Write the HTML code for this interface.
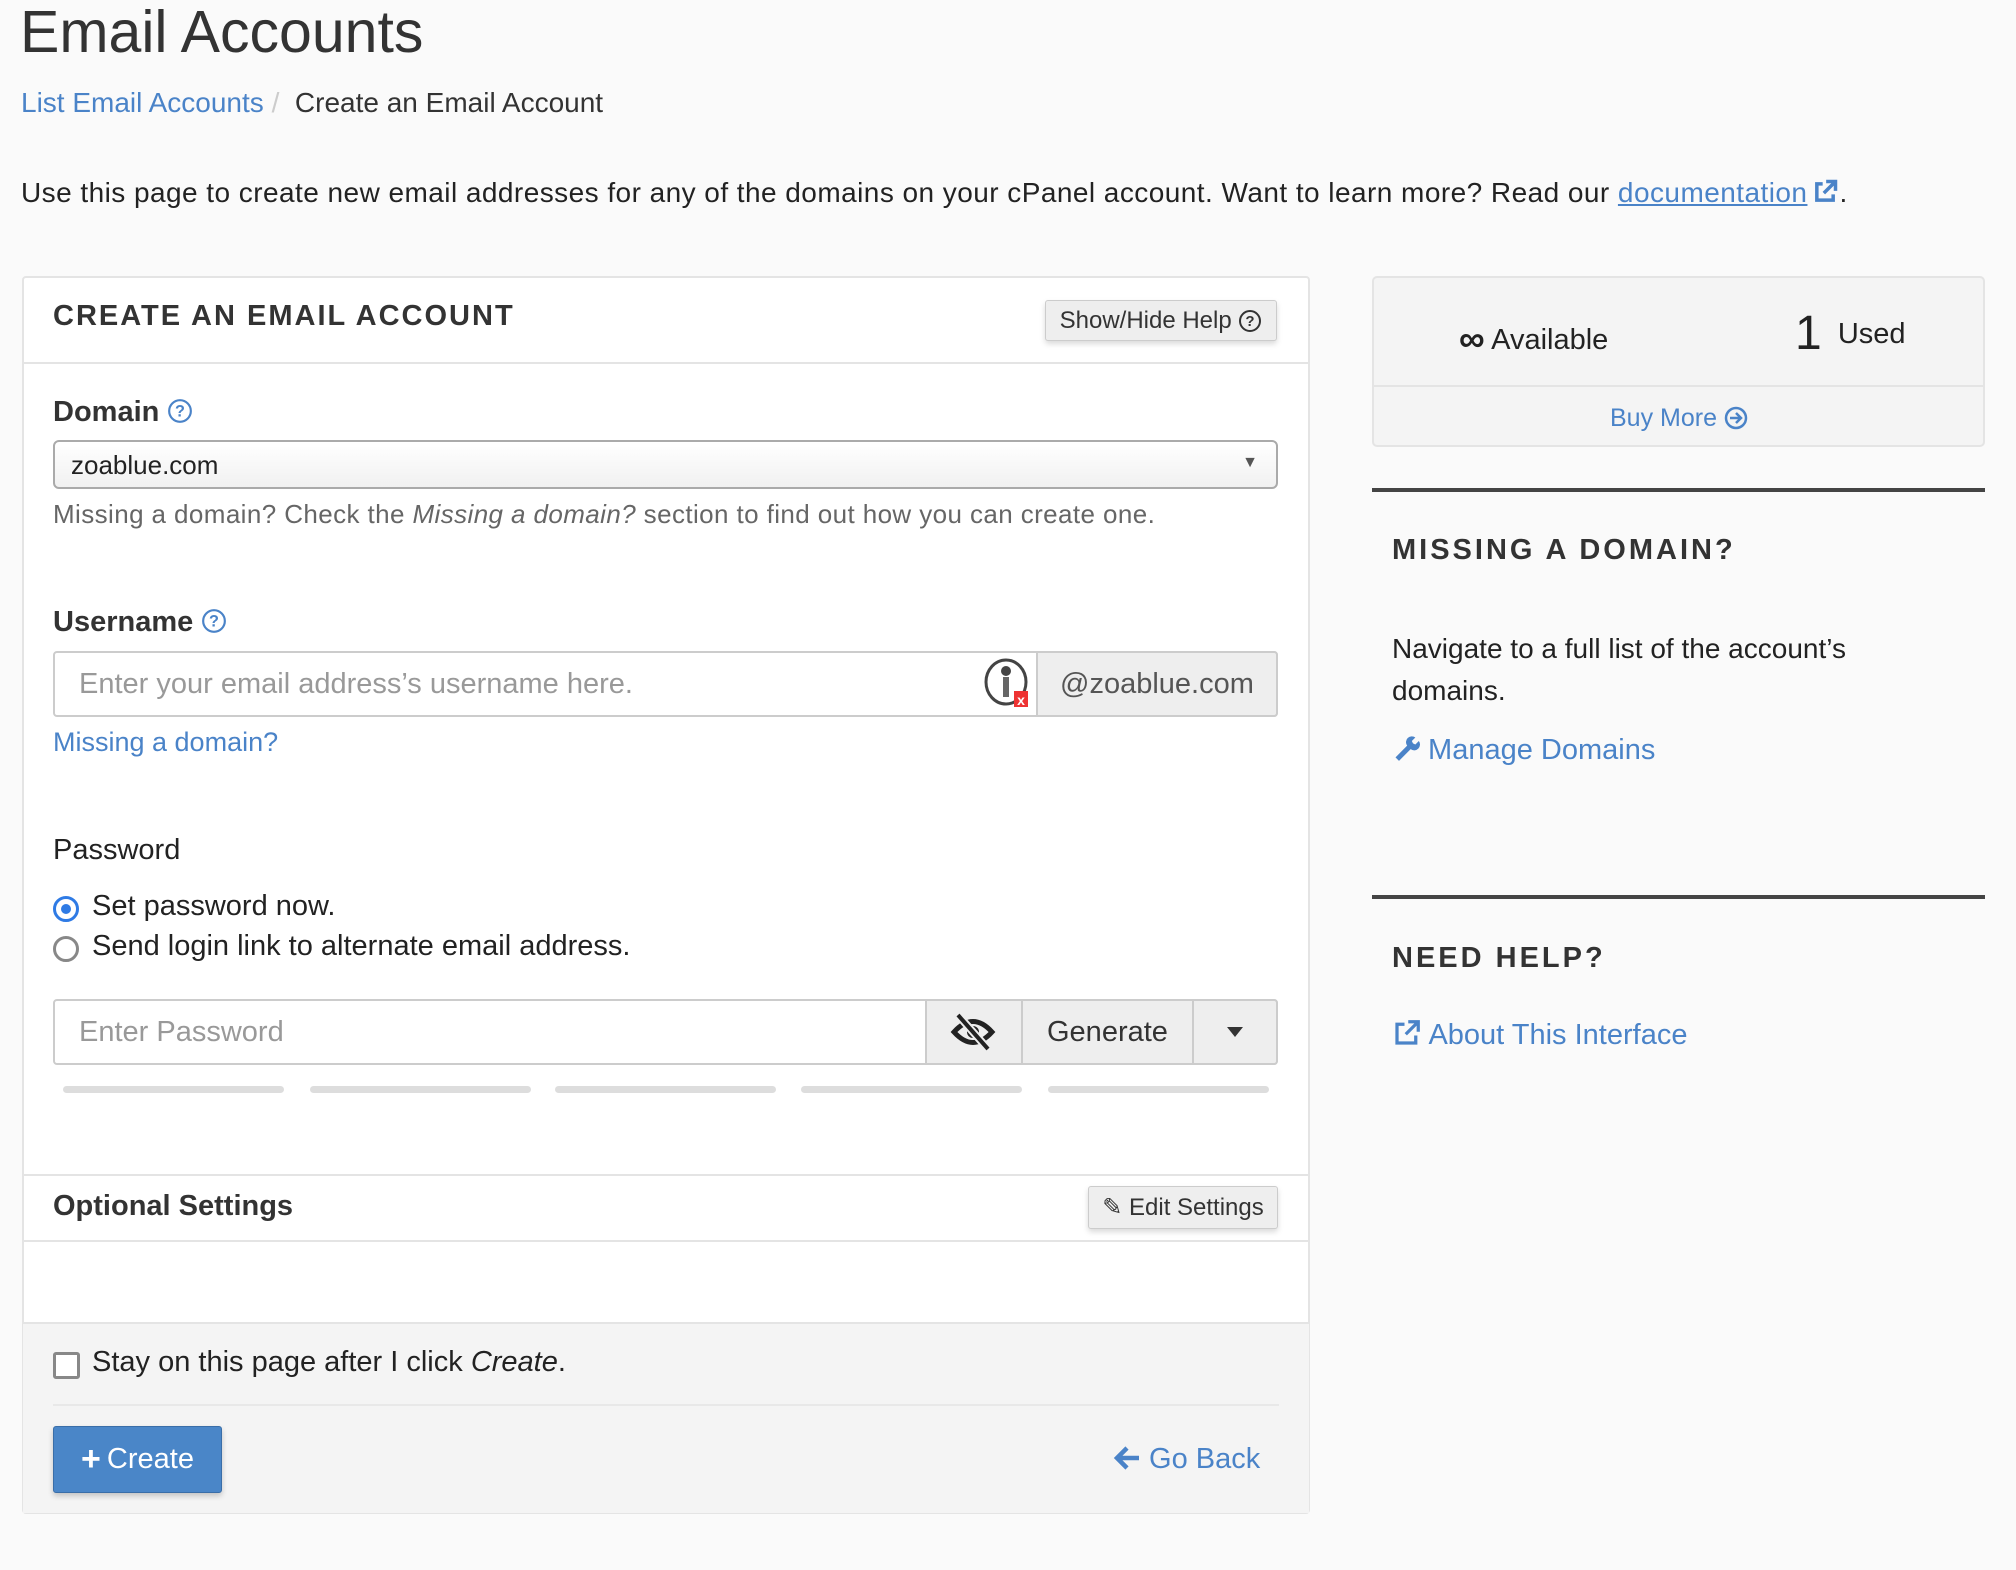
<!DOCTYPE html>
<html><head><meta charset="utf-8"><style>
*{box-sizing:border-box;margin:0;padding:0}
body{width:2016px;height:1570px;background:#fafafa;font-family:"Liberation Sans",sans-serif;color:#333;position:relative;overflow:hidden}
.a{position:absolute;white-space:nowrap}
.blue{color:#4a83c8}
.btn{position:absolute;background:#eee;border:1px solid #ccc;border-radius:3px;box-shadow:0 3px 6px rgba(0,0,0,.15);font-size:24px;color:#333;display:flex;align-items:center;justify-content:center}
.bar{position:absolute;top:1086px;height:7px;width:221px;background:#ddd;border-radius:4px}
</style></head><body>
<div class="a" style="left:20px;top:-2px;font-size:59px;color:#333">Email Accounts</div>
<div class="a" style="left:21px;top:87px;font-size:28px"><span class="blue">List Email Accounts</span> <span style="color:#ccc">/</span> &nbsp;Create an Email Account</div>
<div class="a" style="left:21px;top:177px;font-size:28px;color:#222;letter-spacing:0.45px">Use this page to create new email addresses for any of the domains on your cPanel account. Want to learn more? Read our <span class="blue" style="text-decoration:underline">documentation</span><svg width="28" height="28" viewBox="0 0 24 24" style="vertical-align:-4px;margin-left:4px"><path d="M10 5H5v14h14v-5M13 3h8v8M21 3 11 13" fill="none" stroke="#4a83c8" stroke-width="3"/></svg>.</div>

<!-- main panel -->
<div class="a" style="left:22px;top:276px;width:1288px;height:1238px;background:#fff;border:2px solid #e4e4e4;border-radius:4px"></div>
<div class="a" style="left:23px;top:362px;width:1286px;height:2px;background:#e4e4e4"></div>
<div class="a" style="left:53px;top:300px;font-size:29px;font-weight:bold;letter-spacing:2px;color:#333">CREATE AN EMAIL ACCOUNT</div>
<div class="btn" style="left:1045px;top:300px;width:232px;height:41px">Show/Hide Help&nbsp;<svg width="24" height="24" viewBox="0 0 24 24"><circle cx="12" cy="12" r="10" fill="none" stroke="#333" stroke-width="2"/><text x="12" y="17" font-size="15" text-anchor="middle" font-family="Liberation Sans" font-weight="bold" fill="#333">?</text></svg></div>

<div class="a" style="left:53px;top:396px;font-size:29px;font-weight:bold">Domain <svg width="26" height="26" viewBox="0 0 24 24" style="vertical-align:-3px"><circle cx="12" cy="12" r="10" fill="none" stroke="#4a83c8" stroke-width="2"/><text x="12" y="17" font-size="15" text-anchor="middle" font-family="Liberation Sans" fill="#4a83c8">?</text></svg></div>
<div class="a" style="left:53px;top:440px;width:1225px;height:49px;border:2px solid #aaa;border-radius:6px;background:linear-gradient(#fff,#f1f1f1);font-size:26px;padding:8px 16px;color:#222">zoablue.com<span style="position:absolute;right:18px;top:12px;font-size:16px;color:#555">▼</span></div>
<div class="a" style="left:53px;top:499px;font-size:26px;color:#666;letter-spacing:0.4px">Missing a domain? Check the <i>Missing a domain?</i> section to find out how you can create one.</div>

<div class="a" style="left:53px;top:606px;font-size:29px;font-weight:bold">Username <svg width="26" height="26" viewBox="0 0 24 24" style="vertical-align:-3px"><circle cx="12" cy="12" r="10" fill="none" stroke="#4a83c8" stroke-width="2"/><text x="12" y="17" font-size="15" text-anchor="middle" font-family="Liberation Sans" fill="#4a83c8">?</text></svg></div>
<div class="a" style="left:53px;top:651px;width:1225px;height:66px;border:2px solid #ccc;border-radius:4px;background:#fff"></div>
<div class="a" style="left:79px;top:668px;font-size:29px;color:#999">Enter your email address’s username here.</div>
<svg class="a" style="left:984px;top:657px" width="50" height="52" viewBox="0 0 50 52"><ellipse cx="22" cy="25" rx="20" ry="22" fill="#fff" stroke="#444" stroke-width="3"/><circle cx="22" cy="14" r="5" fill="#444"/><rect x="19" y="20" width="6" height="20" fill="#666"/><rect x="30" y="34" width="14" height="16" fill="#e33"/><text x="37" y="48" font-size="14" fill="#fff" text-anchor="middle" font-family="Liberation Sans" font-weight="bold">x</text></svg>
<div class="a" style="left:1036px;top:651px;width:242px;height:66px;background:#eee;border:2px solid #ccc;border-radius:0 4px 4px 0;font-size:29px;color:#555;padding:15px 22px">@zoablue.com</div>
<div class="a blue" style="left:53px;top:727px;font-size:27px">Missing a domain?</div>

<div class="a" style="left:53px;top:834px;font-size:29px;color:#222">Password</div>
<div class="a" style="left:53px;top:896px;width:26px;height:26px;border:3px solid #2f7be5;border-radius:50%"><div style="margin:5px;width:10px;height:10px;border-radius:50%;background:#2f7be5"></div></div>
<div class="a" style="left:92px;top:890px;font-size:29px;color:#222">Set password now.</div>
<div class="a" style="left:53px;top:936px;width:26px;height:26px;border:3px solid #888;border-radius:50%"></div>
<div class="a" style="left:92px;top:930px;font-size:29px;color:#222">Send login link to alternate email address.</div>

<div class="a" style="left:53px;top:999px;width:1225px;height:66px;border:2px solid #ccc;border-radius:4px;background:#fff"></div>
<div class="a" style="left:79px;top:1016px;font-size:29px;color:#999">Enter Password</div>
<div class="a" style="left:925px;top:999px;width:353px;height:66px;background:#eee;border:2px solid #ccc;border-radius:0 4px 4px 0"></div>
<div class="a" style="left:1021px;top:1000px;width:2px;height:64px;background:#ccc"></div>
<div class="a" style="left:1192px;top:1000px;width:2px;height:64px;background:#ccc"></div>
<svg class="a" style="left:950px;top:1013px" width="46" height="38" viewBox="0 0 46 38"><path d="M4 19Q23 -2 42 19Q23 40 4 19Z" fill="none" stroke="#222" stroke-width="5"/><circle cx="23" cy="19" r="6" fill="#222"/><path d="M8 2 38 36" stroke="#eee" stroke-width="8"/><path d="M8 2 38 36" stroke="#222" stroke-width="4"/></svg>
<div class="a" style="left:1047px;top:1016px;font-size:29px;color:#333">Generate</div>
<svg class="a" style="left:1226px;top:1026px" width="18" height="12" viewBox="0 0 18 12"><path d="M1 1h16L9 11Z" fill="#333"/></svg>
<div class="bar" style="left:63px"></div><div class="bar" style="left:310px"></div><div class="bar" style="left:555px"></div><div class="bar" style="left:801px"></div><div class="bar" style="left:1048px"></div>

<div class="a" style="left:23px;top:1174px;width:1286px;height:2px;background:#e4e4e4"></div>
<div class="a" style="left:53px;top:1190px;font-size:29px;font-weight:bold">Optional Settings</div>
<div class="btn" style="left:1088px;top:1186px;width:190px;height:43px">✎ Edit Settings</div>
<div class="a" style="left:23px;top:1240px;width:1286px;height:2px;background:#e4e4e4"></div>
<div class="a" style="left:23px;top:1322px;width:1286px;height:191px;background:#f4f4f4;border-top:2px solid #e4e4e4"></div>
<div class="a" style="left:53px;top:1352px;width:27px;height:27px;border:3px solid #888;border-radius:3px;background:#fff"></div>
<div class="a" style="left:92px;top:1346px;font-size:29px;color:#222">Stay on this page after I click <i>Create</i>.</div>
<div class="a" style="left:53px;top:1404px;width:1226px;height:2px;background:#e8e8e8"></div>
<div class="a" style="left:53px;top:1426px;width:169px;height:67px;background:#4a86c8;border:1px solid #3a6ea8;border-radius:3px;box-shadow:0 3px 6px rgba(0,0,0,.2);color:#fff;font-size:29px;display:flex;align-items:center;justify-content:center"><b style="font-size:34px;margin-right:6px">+</b>Create</div>
<div class="a blue" style="left:1113px;top:1443px;font-size:29px"><svg width="28" height="26" viewBox="0 0 28 26" style="vertical-align:-3px"><path d="M26 13H5M14 3 4 13l10 10" fill="none" stroke="#4a83c8" stroke-width="4.5"/></svg> Go Back</div>

<!-- right -->
<div class="a" style="left:1372px;top:276px;width:613px;height:171px;background:#f4f4f4;border:2px solid #e4e4e4;border-radius:5px"></div>
<div class="a" style="left:1373px;top:385px;width:611px;height:2px;background:#e4e4e4"></div>
<div class="a" style="left:1459px;top:318px;font-size:29px;color:#222"><b style="font-size:36px;vertical-align:-2px">∞</b> Available</div>
<div class="a" style="left:1795px;top:306px;font-size:29px;color:#222"><span style="font-size:48px;vertical-align:-6px">1</span> &nbsp;Used</div>
<div class="a blue" style="left:1610px;top:404px;font-size:25px">Buy More <svg width="24" height="24" viewBox="0 0 24 24" style="vertical-align:-4px"><circle cx="12" cy="12" r="10" fill="none" stroke="#4a83c8" stroke-width="2.5"/><path d="M6 12h10M12 7l5 5-5 5" fill="none" stroke="#4a83c8" stroke-width="2.5"/></svg></div>

<div class="a" style="left:1372px;top:488px;width:613px;height:4px;background:#444"></div>
<div class="a" style="left:1392px;top:534px;font-size:29px;font-weight:bold;letter-spacing:3px;color:#333">MISSING A DOMAIN?</div>
<div class="a" style="left:1392px;top:628px;font-size:28px;color:#222;line-height:42px;white-space:normal;width:560px">Navigate to a full list of the account’s domains.</div>
<div class="a blue" style="left:1392px;top:734px;font-size:29px"><svg width="28" height="28" viewBox="0 0 24 24" style="vertical-align:-3px"><path d="M3 20 13 10a5 5 0 0 1 7-7l-3 3 1 2 2 1 3-3a5 5 0 0 1-7 7L6 23Z" fill="#4a83c8"/></svg> Manage Domains</div>

<div class="a" style="left:1372px;top:895px;width:613px;height:4px;background:#444"></div>
<div class="a" style="left:1392px;top:942px;font-size:29px;font-weight:bold;letter-spacing:3px;color:#333">NEED HELP?</div>
<div class="a blue" style="left:1392px;top:1018px;font-size:29px"><svg width="30" height="30" viewBox="0 0 24 24" style="vertical-align:-4px"><path d="M10 5H4v15h15v-6M13 3h8v8M21 3 11 13" fill="none" stroke="#4a83c8" stroke-width="2.6"/></svg> About This Interface</div>
</body></html>
